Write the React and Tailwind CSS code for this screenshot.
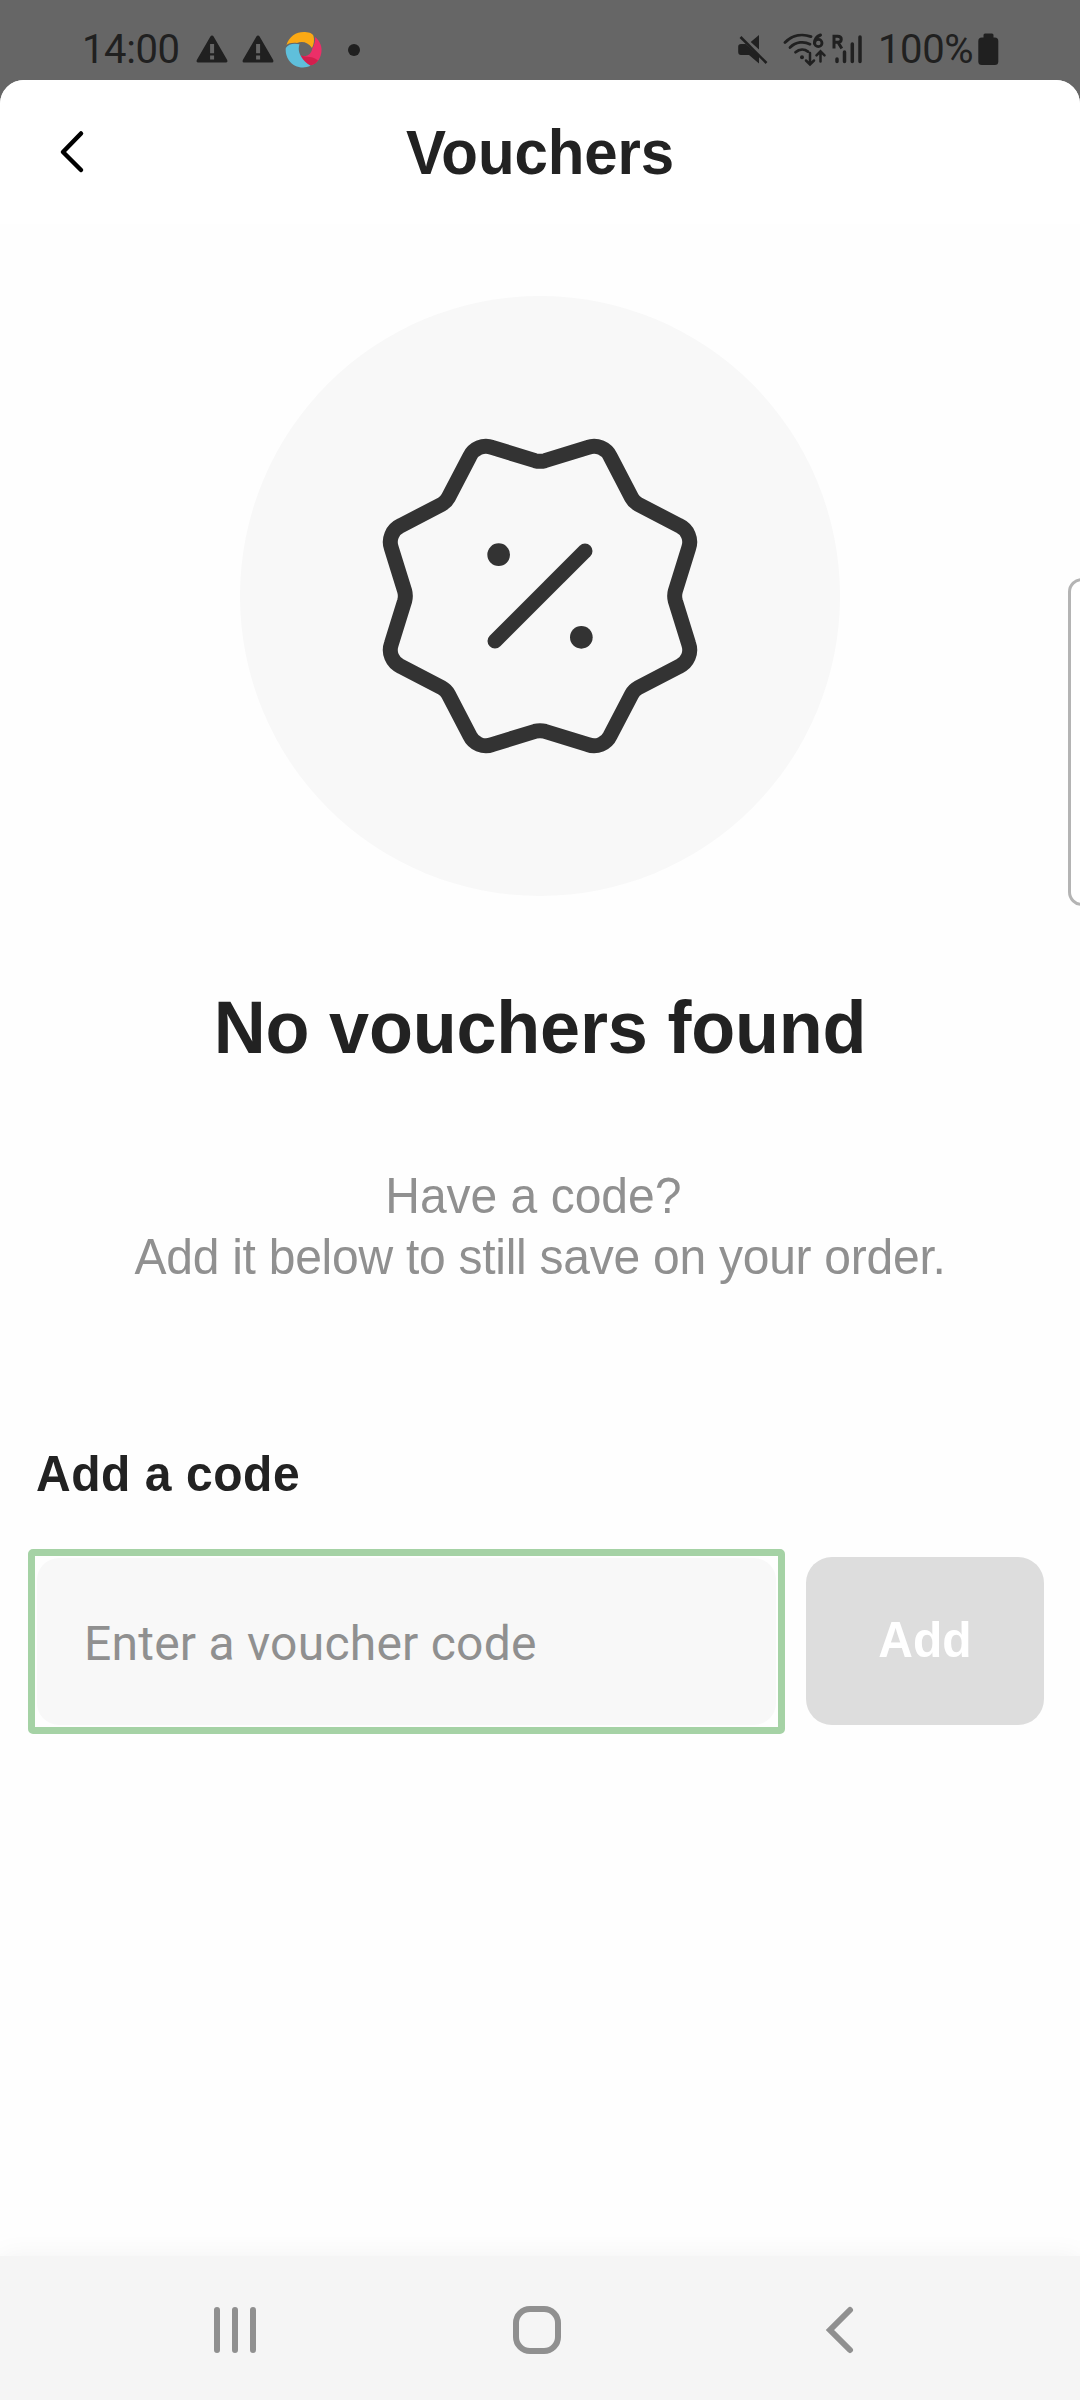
const sans = "font-['Liberation_Sans',Arial,sans-serif]";

function WarningIcon() {
  return (
    <svg className="h-[28px] w-[32px]" viewBox="0 0 32 28" fill="#202020">
      <path
        fillRule="evenodd"
        d="M16 0.5 Q17 .5 17.6 1.5 L31.2 25 Q32 27.4 30 27.6 H2 Q0 27.4 .8 25 L14.4 1.5 Q15 .5 16 .5Z M14.1 9 V18.2 H18.1 V9Z M14.1 20.4 V24.4 H18.1 V20.4Z"
      />
    </svg>
  );
}

function SwirlLogo() {
  return (
    <svg className="h-[38px] w-[38px]" viewBox="0 0 38 38">
      <path d="M1.5 14 C4 5 12 .5 20 1 C25 1.3 28 3 28.5 5 C29.5 9 29 13 27 17 C23 11 17 10 12 12 C7 11.5 3.5 12.5 1.5 14Z" fill="#fba914" />
      <path d="M30 6 C35 10 37.5 16 36.3 22 C35 29 31 33 26 34.3 C21 33 17 29 16 24.5 C22 26.5 26.5 23 27.3 17.5 C29.5 14 30.4 10 30 6Z" fill="#ec2f68" />
      <path d="M16 24.5 C21 26.5 28 24.5 33 29.5 C31 32.3 29 33.5 26 34.3 C21 33 17.5 29.5 16 24.5Z" fill="#d41f4d" />
      <path d="M.8 17 C3 13 9 11.7 14.5 13.3 C12.5 19 14 27 25.5 34.8 C18 38.5 8.500 36 4 29.5 C1.300 25.500 .3 21 .8 17Z" fill="#5fbfdb" />
    </svg>
  );
}

function MuteIcon() {
  return (
    <svg className="h-[30px] w-[30px]" viewBox="0 0 30 30">
      <path d="M.2 12.500 Q.2 10 3 10 H7.500 L21 22 V29.500 L11 21 H3 Q.2 21 .2 18Z" fill="#202020" />
      <path d="M21 1 V15.500 L12.700 8Z" fill="#202020" />
      <path d="M2.500 3 L28.500 29" stroke="#202020" strokeWidth="2.600" />
    </svg>
  );
}

function WifiIcon() {
  return (
    <svg className="h-[34px] w-[43px]" viewBox="0 0 43 34" fill="none" stroke="#202020" strokeWidth="2.800" strokeLinecap="round">
      <path d="M2 9.500 C10 1.500 20 .7 28 3.600" />
      <path d="M7 14.500 C13 8.700 21 8 27 11.200" />
      <path d="M12.500 19.200 C16.500 15.700 21.500 15.800 25 18.600" />
      <circle cx="19" cy="24.200" r="2" fill="#202020" stroke="none" />
      <path d="M27 20 V31 M23 27.500 L27 31.500 L31 27.500" strokeWidth="2.500" />
      <path d="M37.500 28.500 V19 M33.500 22.300 L37.500 18.300 L41.500 22.300" strokeWidth="2.500" />
      <path d="M37.500 2 C33.500 3.500 31.500 7 31.500 10.300" strokeWidth="3" />
      <circle cx="35.300" cy="10" r="3.700" strokeWidth="2.800" />
    </svg>
  );
}

function SignalIcon() {
  return (
    <svg className="h-[32px] w-[31px]" viewBox="0 0 31 32" fill="none" stroke="#202020" strokeLinecap="round">
      <path d="M2 15.500 V3.300 H5.500 C10.500 3.300 10.500 9.300 5.500 9.300 H2 M6 9.300 L9.800 15.500" strokeWidth="3" strokeLinecap="butt" />
      <path d="M5 26 V28.500 M12.500 19 V28.500 M20.300 11 V28.500 M28 4 V28.500" strokeWidth="3.500" />
    </svg>
  );
}

function BatteryIcon() {
  return (
    <svg className="h-[32px] w-[21px]" viewBox="0 0 21 32" fill="#202020">
      <rect x="5.500" y="0.500" width="10" height="8" rx="1.500" />
      <rect x="0.300" y="4.500" width="20" height="27.500" rx="3.500" />
    </svg>
  );
}

function StatusBar() {
  return (
    <header className="flex h-[80px] items-start justify-between bg-[#666] pl-[82px] pr-[81px] pt-[24px] font-[Roboto,sans-serif] text-[40px] leading-[50px] tracking-[-0.4px] text-[#202020]">
      <div className="flex h-[50px] items-center">
        <span className="mt-[2px] w-[114px]">14:00</span>
        <div className="flex items-center gap-[14px]">
          <WarningIcon />
          <WarningIcon />
        </div>
        <div className="ml-[11px] mt-[2px]">
          <SwirlLogo />
        </div>
        <span className="ml-[25px] mt-[2px] h-[12px] w-[12px] rounded-full bg-[#202020]" />
      </div>
      <div className="flex h-[50px] items-center">
        <MuteIcon />
        <div className="ml-[15px] mt-[1px]">
          <WifiIcon />
        </div>
        <div className="ml-[6px]">
          <SignalIcon />
        </div>
        <span className="ml-[15px] mt-[2px] w-[100px]">100%</span>
        <BatteryIcon />
      </div>
    </header>
  );
}

function VoucherBadge() {
  return (
    <div className="flex h-[600px] w-[600px] items-center justify-center rounded-full bg-[#f8f8f8]">
      <svg className="h-[320px] w-[320px]" viewBox="-480 -480 960 960" fill="none" stroke="#333" strokeWidth="45" strokeLinecap="round">
        <path d="M-406 -15 L-446 -144 A54 54 0 0 1 -418 -211 L-295 -275 Q-282 -282 -275 -295 L-211 -418 A54 54 0 0 1 -144 -446 L-15 -406 Q0 -402 15 -406 L144 -446 A54 54 0 0 1 211 -418 L275 -295 Q282 -282 295 -275 L418 -211 A54 54 0 0 1 446 -144 L406 -15 Q402 0 406 15 L446 144 A54 54 0 0 1 418 211 L295 275 Q282 282 275 295 L211 418 A54 54 0 0 1 144 446 L15 406 Q0 402 -15 406 L-144 446 A54 54 0 0 1 -211 418 L-275 295 Q-282 282 -295 275 L-418 211 A54 54 0 0 1 -446 144 L-406 15 Q-402 0 -406 -15Z" />
        <path d="M-135 135 L135 -135" />
        <circle cx="-124" cy="-124" r="34" fill="#333" stroke="none" />
        <circle cx="124" cy="124" r="34" fill="#333" stroke="none" />
      </svg>
    </div>
  );
}

function NavBar() {
  return (
    <nav className="relative z-10 flex h-[144px] items-center bg-[#f5f5f5] pl-[211px] pt-[4px] shadow-[0_0_26px_rgba(0,0,0,0.05)]">
      <svg className="h-[48px] w-[48px]" viewBox="0 0 48 48" stroke="#909090" strokeWidth="6" strokeLinecap="round">
        <path d="M6 4 V44 M24 4 V44 M42 4 V44" />
      </svg>
      <svg className="ml-[254px] h-[48px] w-[48px]" viewBox="0 0 48 48" fill="none" stroke="#909090" strokeWidth="6">
        <rect x="3" y="3" width="42" height="42" rx="14" />
      </svg>
      <svg className="ml-[260px] h-[48px] w-[36px]" viewBox="0 0 36 48" fill="none" stroke="#909090" strokeWidth="6" strokeLinecap="round">
        <path d="M29 4 L9 24 L29 44" />
      </svg>
    </nav>
  );
}

export default function App() {
  return (
    <div className={`relative flex h-[2400px] w-[1080px] flex-col overflow-hidden bg-[#666] ${sans} text-[#222]`}>
      <StatusBar />
      <main className="flex flex-1 flex-col rounded-t-[24px] bg-[#fefefe]">
        <div className="grid h-[144px] grid-cols-[1fr_auto_1fr] items-center rounded-t-[24px] bg-white">
          <svg className="ml-[54px] h-[48px] w-[36px]" viewBox="0 0 36 48" fill="none" stroke="#000" strokeWidth="4.500" strokeLinecap="round" strokeLinejoin="round">
            <path d="M27 5.500 L9 24 L27 42" />
          </svg>
          <h1 className="mt-[2px] scale-y-[1.040] text-[60px] font-bold leading-[68px] tracking-[-0.1px]">Vouchers</h1>
        </div>

        <section className="mt-[72px] flex flex-col items-center text-center">
          <VoucherBadge />
          <h2 className="mt-[89px] h-[84px] scale-y-[1.040] whitespace-nowrap text-[72px] font-bold leading-[84px] tracking-[-0.2px]">No vouchers found</h2>
          <p className="mt-[98px] scale-y-[1.030] whitespace-nowrap text-[48px] leading-[60px] text-[#909090]">
            Have a code?&nbsp;
            <br />
            <span className="tracking-[-0.26px]">Add it below to still save on your order.</span>
          </p>
        </section>

        <section className="mt-[159px] px-[36px]">
          <h3 className="scale-y-[1.040] text-[48px] font-bold leading-[56px] tracking-[0.55px]">Add a code</h3>
          <div className="-ml-[8px] mt-[47px] flex items-start gap-[21px]">
            <div className="h-[185px] w-[757px] rounded-[5px] border-[7px] border-[#a5d2a5] p-[2px]">
              <input
                className="h-full w-full rounded-[22px] bg-[#f8f8f8] pl-[47px] pt-[3px] font-[Roboto,sans-serif] text-[48px] tracking-[0.23px] text-[#222] outline-none placeholder:text-[#909090]"
                placeholder="Enter a voucher code"
              />
            </div>
            <button className="mt-[8px] h-[168px] w-[238px] rounded-[26px] bg-[#ddd] pb-[2px] text-[48px] font-bold text-white">
              <span className="inline-block scale-y-[1.040]">Add</span>
            </button>
          </div>
        </section>
      </main>
      <NavBar />
      <div className="absolute -right-[20px] top-[578px] h-[328px] w-[32px] rounded-[14px] border-[3px] border-[#b4b4b4] bg-white" />
    </div>
  );
}
